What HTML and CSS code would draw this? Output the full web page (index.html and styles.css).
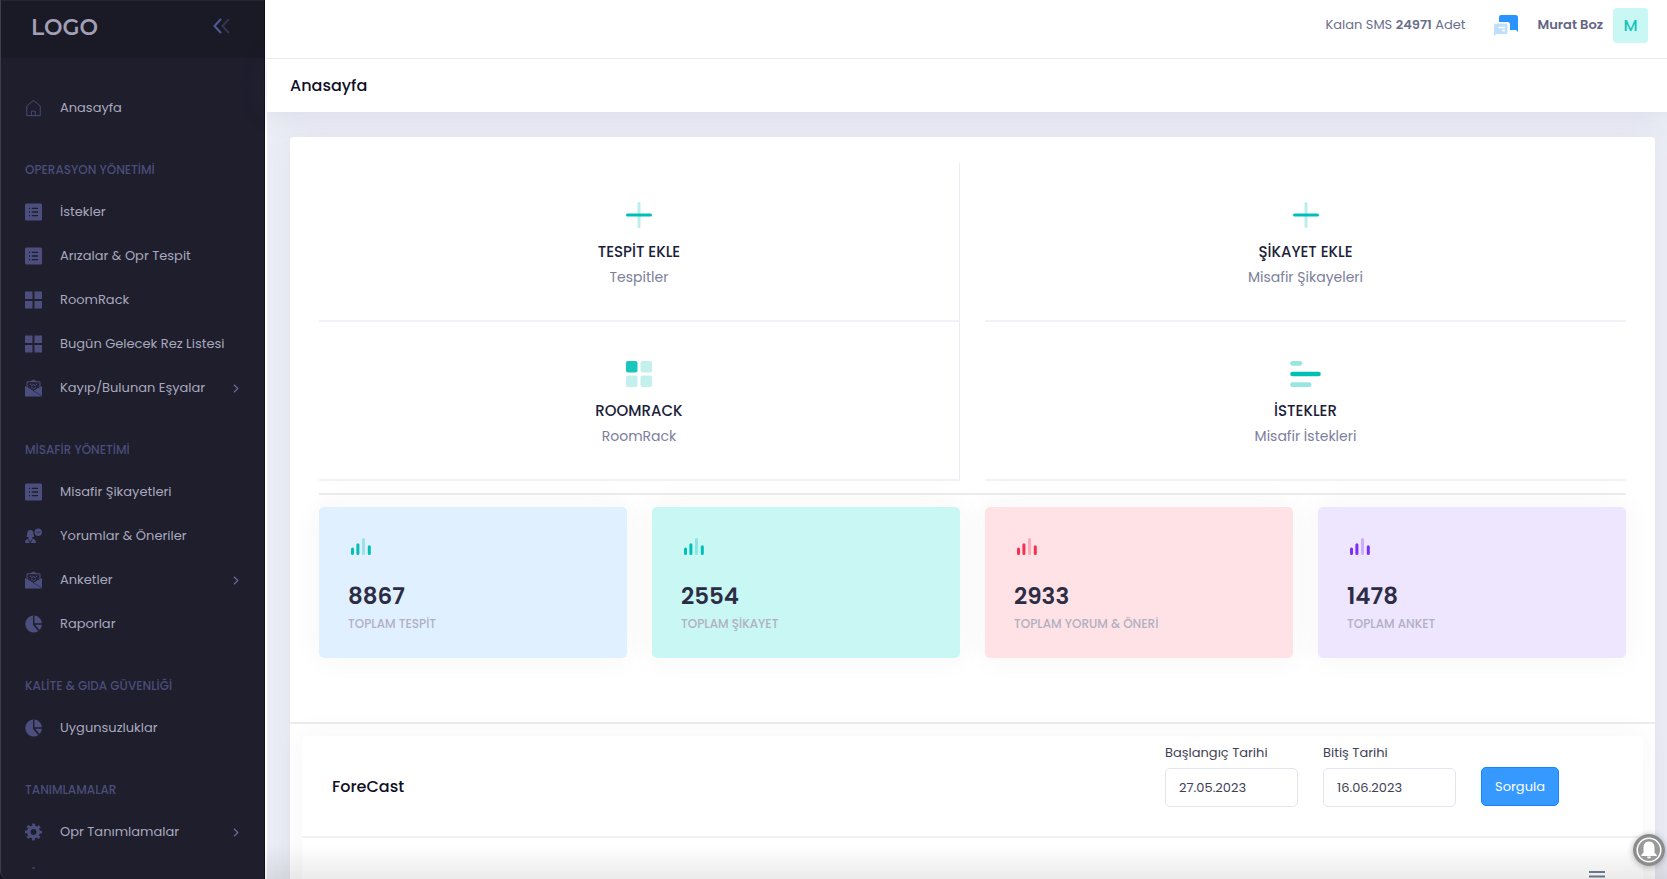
FILE: index.html
```html
<!DOCTYPE html>
<html lang="tr">
<head>
<meta charset="utf-8">
<meta name="viewport" content="width=device-width, initial-scale=1">
<title>Anasayfa</title>
<link rel="stylesheet" href="styles.css">
</head>
<body>
<svg class="sprite" aria-hidden="true">
  <symbol id="i-home" viewBox="0 0 18 20"><path d="M1.500 10.500V8L9 1.500 16.500 8v2M1.500 9v9.500h15V10M6.800 18.500V13.500H11v5" fill="none" stroke="currentColor" stroke-width="1"/></symbol>
  <symbol id="i-list" viewBox="0 0 17 17"><rect width="17" height="17" rx="1.500" fill="currentColor"/><path d="M4 4.900h1M4 8.500h1M4 12.100h1M6.800 4.900H13M6.800 8.500H13M6.800 12.100H13" stroke="#1e1e2d" stroke-width="1.300"/></symbol>
  <symbol id="i-grid" viewBox="0 0 17 17"><path d="M0 0h7.500v7.500H0zM9.500 0H17v7.500H9.500zM0 9.500h7.500V17H0zM9.500 9.500H17V17H9.500z" fill="currentColor"/></symbol>
  <symbol id="i-mail" viewBox="0 0 17 17"><path d="M2 8V2.200h4L8.500.5 11 2.200h4V8l-6.500 4z" fill="#25253a" stroke="currentColor" stroke-width=".9"/><path d="M0 6.500 8.500 11.500 17 6.500V17H0z" fill="currentColor"/><path d="M8.500 11.500 17 16.600" stroke="#1e1e2d" stroke-width=".6"/><path d="M6.500.9h4L12 2.500H5z" fill="currentColor"/><path d="M5 4.500l2 2 1.500-2 1.500 2 2-2M6 8l2.500 1L11 8" fill="none" stroke="currentColor" stroke-width=".8"/></symbol>
  <symbol id="i-user" viewBox="0 0 17 17"><circle cx="13.200" cy="4.700" r="3.700" fill="currentColor"/><path d="M11.200 4.700h4" stroke="#1e1e2d" stroke-width=".6"/><path d="M5.300 2.500c2.200 0 3.200 1.600 3.200 3.700l.7 3-2 .6v1l3.200 1.700.6 3H0l.6-3 3-1.700v-1l-2.100-.6.700-3c0-2.100 1-3.700 3.100-3.700z" fill="currentColor"/><path d="M3.200 11.800l2 3.700 2.100-3.700" fill="none" stroke="#1e1e2d" stroke-width=".9"/></symbol>
  <symbol id="i-pie" viewBox="0 0 17 17"><path d="M8 0v9.200l5.300 6.500A8.500 8.500 0 1 1 8 0zM9.400 0A8.300 8.300 0 0 1 17 7.700H9.400zM10.200 9.200H17a8 8 0 0 1-2.700 5.300z" fill="currentColor"/></symbol>
  <symbol id="i-gear" viewBox="0 0 17 17"><circle cx="8.500" cy="8.500" r="4.700" fill="none" stroke="currentColor" stroke-width="3.600"/><circle cx="8.500" cy="8.500" r="7.200" fill="none" stroke="currentColor" stroke-width="2.600" stroke-dasharray="2.900 2.755" stroke-dashoffset="1.450"/></symbol>
  <symbol id="i-next" viewBox="0 0 6 9"><path d="M1 .8l3.800 3.700L1 8.200" fill="none" stroke="currentColor" stroke-width="1.200"/></symbol>
  <symbol id="i-plus" viewBox="0 0 26 26"><rect x="11.500" width="3" height="26" rx="1.500" fill="#00c0b5" opacity=".27"/><rect y="11.500" width="26" height="3" rx="1.500" fill="#00c0b5"/></symbol>
  <symbol id="i-bars" viewBox="0 0 20 17"><path d="M1.500 11v4.500M6.900 6.700v8.800M18.300 8.700v6.800" stroke="currentColor" stroke-width="3" stroke-linecap="round"/><path d="M12.500 1.500v14" stroke="currentColor" stroke-width="3" stroke-linecap="round" opacity=".3"/></symbol>
</svg>

<div class="shell">
  <aside class="sidebar">
    <div class="brand">
      <a class="logo" href="#">LOGO</a>
      <button class="collapse" type="button" aria-label="Menüyü daralt">
        <svg width="17" height="16" viewBox="0 0 17 16" fill="none" stroke-width="2"><path d="M16 1L9.500 8l6.500 7" stroke="#33334f"/><path d="M8 1L1.500 8 8 15" stroke="#4f5a94"/></svg>
      </button>
    </div>
    <nav class="menu">
      <a class="item" href="#"><svg class="icon"><use href="#i-home"/></svg>Anasayfa</a>
      <h2 class="section">OPERASYON YÖNETİMİ</h2>
      <a class="item" href="#"><svg class="icon"><use href="#i-list"/></svg>İstekler</a>
      <a class="item" href="#"><svg class="icon"><use href="#i-list"/></svg>Arızalar &amp; Opr Tespit</a>
      <a class="item" href="#"><svg class="icon"><use href="#i-grid"/></svg>RoomRack</a>
      <a class="item" href="#"><svg class="icon"><use href="#i-grid"/></svg>Bugün Gelecek Rez Listesi</a>
      <a class="item" href="#"><svg class="icon"><use href="#i-mail"/></svg>Kayıp/Bulunan Eşyalar<svg class="arrow"><use href="#i-next"/></svg></a>
      <h2 class="section">MİSAFİR YÖNETİMİ</h2>
      <a class="item" href="#"><svg class="icon"><use href="#i-list"/></svg>Misafir Şikayetleri</a>
      <a class="item" href="#"><svg class="icon"><use href="#i-user"/></svg>Yorumlar &amp; Öneriler</a>
      <a class="item" href="#"><svg class="icon"><use href="#i-mail"/></svg>Anketler<svg class="arrow"><use href="#i-next"/></svg></a>
      <a class="item" href="#"><svg class="icon"><use href="#i-pie"/></svg>Raporlar</a>
      <h2 class="section">KALİTE &amp; GIDA GÜVENLİĞİ</h2>
      <a class="item" href="#"><svg class="icon"><use href="#i-pie"/></svg>Uygunsuzluklar</a>
      <h2 class="section">TANIMLAMALAR</h2>
      <a class="item" href="#"><svg class="icon"><use href="#i-gear"/></svg>Opr Tanımlamalar<svg class="arrow"><use href="#i-next"/></svg></a>
      <a class="item" href="#" aria-label="Tanımlamalar"><svg class="icon" viewBox="0 0 17 17"><path d="M7 .5h3" stroke="currentColor"/></svg></a>
    </nav>
  </aside>

  <div class="main">
    <header class="topbar">
      <span class="sms">Kalan SMS <b>24971</b> Adet</span>
      <button class="chat" type="button" aria-label="Mesajlar">
        <svg width="24" height="21" viewBox="0 0 24 21"><path d="M7 0h14.500A2.500 2.500 0 0 1 24 2.500V17l-2-2h-6V9.500A2.500 2.500 0 0 0 13.500 7H5V2a2 2 0 0 1 2-2z" fill="#2b93ff"/><path d="M2 8.500h9.500a2 2 0 0 1 2 2V17a2 2 0 0 1-2 2H2.500L0 21V10.500a2 2 0 0 1 2-2z" fill="#bfdfff"/><path d="M4.500 12.500H11M8 15.500h3" stroke="#fff" stroke-width="1.300"/></svg>
      </button>
      <button class="user" type="button">Murat Boz <span class="avatar">M</span></button>
    </header>
    <div class="subheader"><h1>Anasayfa</h1></div>

    <main class="content">
      <div class="panel">
        <div class="panel-body">
          <div class="tiles">
            <div class="tile-col divided">
              <a class="tile" href="#"><svg class="tile-icon" viewBox="0 0 26 26"><use href="#i-plus"/></svg><strong>TESPİT EKLE</strong><span>Tespitler</span></a>
              <a class="tile" href="#"><svg class="tile-icon" viewBox="0 0 26 26" fill="#00c0b5"><rect width="11.500" height="11.500" rx="2" opacity=".9"/><g opacity=".23"><rect x="14.500" width="11.500" height="11.500" rx="2"/><rect y="14.500" width="11.500" height="11.500" rx="2"/><rect x="14.500" y="14.500" width="11.500" height="11.500" rx="2"/></g></svg><strong>ROOMRACK</strong><span>RoomRack</span></a>
            </div>
            <div class="tile-col">
              <a class="tile" href="#"><svg class="tile-icon" viewBox="0 0 26 26"><use href="#i-plus"/></svg><strong>ŞİKAYET EKLE</strong><span>Misafir Şikayeleri</span></a>
              <a class="tile" href="#"><svg class="tile-icon wide" viewBox="0 0 33 28" fill="#00c0b5"><rect width="13" height="5" rx="2.500" opacity=".4"/><rect y="11.500" width="33" height="5" rx="2.500"/><rect y="23" width="23" height="5" rx="2.500" opacity=".4"/></svg><strong>İSTEKLER</strong><span>Misafir İstekleri</span></a>
            </div>
          </div>
          <div class="stats">
            <div class="stat blue"><svg class="stat-icon"><use href="#i-bars"/></svg><strong>8867</strong><span>TOPLAM TESPİT</span></div>
            <div class="stat teal"><svg class="stat-icon"><use href="#i-bars"/></svg><strong>2554</strong><span>TOPLAM ŞİKAYET</span></div>
            <div class="stat red"><svg class="stat-icon"><use href="#i-bars"/></svg><strong>2933</strong><span>TOPLAM YORUM &amp; ÖNERİ</span></div>
            <div class="stat purple"><svg class="stat-icon"><use href="#i-bars"/></svg><strong>1478</strong><span>TOPLAM ANKET</span></div>
          </div>
        </div>

        <section class="forecast">
          <form class="forecast-head">
            <h2>ForeCast</h2>
            <div class="field"><label for="start">Başlangıç Tarihi</label><input id="start" type="text" value="27.05.2023"></div>
            <div class="field"><label for="end">Bitiş Tarihi</label><input id="end" type="text" value="16.06.2023"></div>
            <button class="query" type="button">Sorgula</button>
          </form>
          <div class="forecast-body">
            <button class="chart-menu" type="button" aria-label="Grafik menüsü"><svg width="16" height="14" viewBox="0 0 16 14"><path d="M0 1h16M0 5.500h16M0 10h16" stroke="#6e8192" stroke-width="2"/></svg></button>
          </div>
        </section>
      </div>
    </main>
  </div>
</div>
<div class="fade"></div>
<button class="bell" type="button" aria-label="Bildirimler">
  <svg width="32" height="32" viewBox="0 0 32 32"><circle cx="16" cy="16" r="16" fill="#8c8c8c"/><circle cx="16" cy="16" r="11.800" fill="#999" stroke="#fff" stroke-width="1.500"/><path d="M16 7.500c-4 0-5.500 3-5.500 6v5L8.300 21v1h15.400v-1l-2.200-2.500v-5c0-3-1.500-6-5.500-6zM14 22.500h4a2 2 0 0 1-4 0z" fill="#fff"/></svg>
</button>
</body>
</html>
```

FILE: styles.css
```css
* { box-sizing: border-box; }

body {
  margin: 0;
  font-family: Poppins, Inter, "Open Sans", sans-serif;
  font-size: 13px;
  color: #3f4254;
  background: #15151f;
}

h1, h2 { margin: 0; font-weight: 500; }
a { color: inherit; text-decoration: none; }
button { font: inherit; border: 0; padding: 0; background: none; cursor: pointer; }
svg { display: block; flex: none; }
.sprite { position: absolute; width: 0; height: 0; }

.shell { display: flex; height: 100vh; overflow: hidden; }

/* Sidebar */
.sidebar {
  flex: 0 0 265px;
  overflow: hidden;
  background: #1e1e2d;
  border-left: 1px solid #3d3d4b;
  border-right: 1px solid #12101f;
  border-bottom-left-radius: 8px;
}
.brand {
  display: flex;
  align-items: center;
  justify-content: space-between;
  height: 58px;
  padding: 0 34px 4px 30px;
  background: #1a1a27;
  border-top: 1px solid #262633;
}
.logo { font-family: Montserrat, Lato, sans-serif; font-size: 22px; font-weight: 600; line-height: 28px; color: #a3a0b6; }
.collapse { padding-bottom: 4px; }
.menu { padding-top: 28px; }
.item {
  display: flex;
  align-items: center;
  height: 44px;
  padding: 0 25px 0 24px;
  color: #a9a8bd;
}
.icon { width: 17px; height: 18px; margin-right: 18px; color: #4c4e7d; }
.arrow { width: 6px; height: 9px; margin-left: auto; color: #686b9c; }
.section {
  height: 60px;
  padding: 20px 24px 0;
  font-size: 12px;
  line-height: 40px;
  color: #4b4d78;
  white-space: nowrap;
}

/* Header */
.main {
  flex: 1;
  min-width: 0;
  display: flex;
  flex-direction: column;
  border-left: 2px solid #fff;
  background: #ebedf6;
}
.topbar {
  position: relative;
  z-index: 1;
  flex: none;
  display: flex;
  align-items: center;
  justify-content: flex-end;
  height: 59px;
  padding: 0 19px 8px;
  background: #fff;
  border-bottom: 1px solid #ebebee;
  color: #6c6e8c;
}
.sms b { font-weight: 600; }
.chat { margin: 0 20px 0 28px; }
.user { display: flex; align-items: center; gap: 10px; font-weight: 600; color: #636585; }
.avatar {
  width: 35px;
  border-radius: 4px;
  background: #c9f7f4;
  color: #14c5bd;
  font-size: 16px;
  font-weight: 500;
  line-height: 35px;
}
.subheader {
  flex: none;
  padding: 0 23px;
  background: #fff;
  box-shadow: 0 0 30px rgba(70, 65, 110, .12);
}
.subheader h1 { font-size: 16px; line-height: 53px; color: #0f1026; }

/* Content */
.content { flex: 1; min-height: 0; padding: 25px 12px 0 23px; overflow: hidden; }
.panel { min-height: 100%; background: #fff; border-radius: 4px; box-shadow: 0 0 30px rgba(82, 63, 105, .06); }
.panel-body { padding: 26px 29px 64px; border-bottom: 2px solid #ececed; }

.tiles { display: grid; grid-template-columns: 1fr 1fr; gap: 25px; padding-bottom: 12px; border-bottom: 2px solid #ececed; }
.divided { border-right: 1px solid #ebedf3; }
.tile {
  display: flex;
  flex-direction: column;
  align-items: center;
  padding: 39px 0 30px;
  border-bottom: 2px solid #f1f1f8;
  color: #7c7e9b;
  font-size: 14px;
  line-height: 26px;
}
.tile strong { margin-top: 11px; font-size: 15px; font-weight: 500; line-height: 25px; color: #1c1e3a; }
.tile-icon { width: 26px; height: 26px; }
.tile-icon.wide { width: 33px; }

.stats { display: grid; grid-template-columns: repeat(4, 1fr); gap: 25px; padding-top: 12px; }
.stat {
  padding: 31px 29px 24px;
  border-radius: 5px;
  box-shadow: 0 0 30px rgba(82, 63, 105, .05);
}
.stat-icon { width: 20px; height: 17px; margin: 0 0 24px 3px; }
.stat strong { display: block; font-size: 23px; font-weight: 600; line-height: 34px; color: #2c2d45; }
.stat span { display: block; font-size: 12px; line-height: 21px; color: #b0b0c2; font-weight: 500; }
.blue { background: #e1f0ff; color: #00c0b5; }
.teal { background: #c9f7f4; color: #00c0b5; }
.red { background: #ffe2e5; color: #f8304f; }
.purple { background: #eee5ff; color: #7a2ff7; }

/* Forecast */
.forecast { margin: 12px 12px 0; border-radius: 4px; box-shadow: 0 0 30px rgba(82, 63, 105, .05); }
.forecast-head {
  display: flex;
  align-items: flex-start;
  gap: 25px;
  padding: 7px 84px 29px 30px;
  border-bottom: 2px solid #f1f1f8;
}
.forecast-head h2 { flex: 1; padding-top: 32px; font-size: 16px; line-height: 24px; color: #0f1026; }
.field { width: 133px; }
.field label { display: block; margin-bottom: 5px; line-height: 20px; }
.field input {
  display: block;
  width: 100%;
  height: 39px;
  padding: 0 13px;
  border: 1px solid #e4e6ef;
  border-radius: 5px;
  font: inherit;
  color: inherit;
  background: #fff;
}
.query {
  width: 78px;
  height: 39px;
  margin-top: 24px;
  border: 1px solid #1285ff;
  border-radius: 5px;
  background: #3699ff;
  color: #fff;
}
.forecast-body { display: flex; align-items: flex-start; justify-content: flex-end; min-height: 60px; padding: 33px 38px 0; }

.fade {
  position: fixed;
  inset: auto 0 0 265px;
  height: 34px;
  background: linear-gradient(transparent, rgba(0, 0, 0, .08));
  pointer-events: none;
}
.bell { position: fixed; right: 2px; bottom: 13px; border-radius: 50%; box-shadow: 0 1px 6px rgba(0, 0, 0, .3); }
```
